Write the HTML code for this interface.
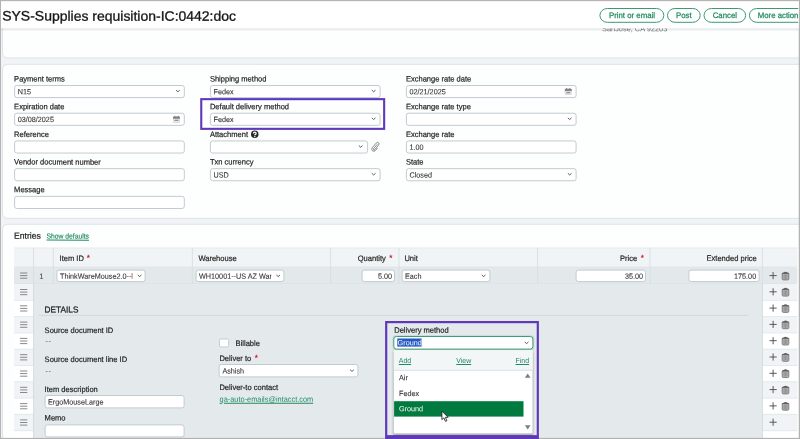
<!DOCTYPE html><html><head><meta charset="utf-8"><title>SYS-Supplies requisition</title>
<style>html,body{margin:0;padding:0;}body{width:800px;height:439px;overflow:hidden;position:relative;background:#f1f4f6;font-family:"Liberation Sans", sans-serif;}#root{position:absolute;left:0;top:0;width:800px;height:439px;overflow:hidden;will-change:transform;}.t{position:absolute;left:0;top:0;white-space:nowrap;transform-origin:0 0;}svg{display:block}</style></head><body><div id="root">
<svg style="position:absolute;left:0;top:0" width="800" height="439" viewBox="0 0 800 439"><rect x="0.00" y="0.00" width="800.00" height="439.00" rx="0" fill="#f1f4f6" /><rect x="2.50" y="20.50" width="817.00" height="37.50" rx="5" fill="#fdfefe" stroke="#dce3e7" stroke-width="1" /><rect x="2.50" y="64.30" width="817.00" height="154.10" rx="5" fill="#fdfefe" stroke="#dce3e7" stroke-width="1" /><rect x="2.50" y="224.25" width="817.00" height="245.25" rx="5" fill="#fdfefe" stroke="#dce3e7" stroke-width="1" /></svg>
<div class="t" style="font-size:7.4px;line-height:9px;height:9px;color:#666;transform:matrix(1.0,0.0006,0,1,602.00,24.30);">SanJose, CA 92203</div>
<svg style="position:absolute;left:0;top:0" width="800" height="439" viewBox="0 0 800 439"><defs><linearGradient id="hs" x1="0" y1="0" x2="0" y2="1"><stop offset="0" stop-color="#5a6b75" stop-opacity=".22"/><stop offset="1" stop-color="#5a6b75" stop-opacity="0"/></linearGradient></defs><rect x="1.00" y="28.20" width="798.00" height="3.00" rx="0" fill="url(#hs)" /><rect x="1.00" y="1.00" width="798.00" height="27.40" rx="0" fill="#fff" /><rect x="599.90" y="8.50" width="63.90" height="13.80" rx="7.4" fill="#fff" stroke="#3c9a73" stroke-width="1" /><rect x="667.50" y="8.50" width="32.70" height="13.80" rx="7.4" fill="#fff" stroke="#3c9a73" stroke-width="1" /><rect x="704.00" y="8.50" width="41.60" height="13.80" rx="7.4" fill="#fff" stroke="#3c9a73" stroke-width="1" /><rect x="749.40" y="8.50" width="80.10" height="13.80" rx="7.4" fill="#fff" stroke="#3c9a73" stroke-width="1" /></svg>
<div class="t" style="font-size:13.7px;line-height:15px;height:15px;color:#151515;-webkit-text-stroke:0.3px #151515;transform:matrix(1.021,0.0006,0,1,2.20,8.60);">SYS-Supplies requisition-IC:0442:doc</div>
<div class="t" style="font-size:8.0px;line-height:9px;height:9px;color:#1f8a5f;-webkit-text-stroke:0.25px #1f8a5f;transform:matrix(0.975,0.0006,0,1,609.00,10.90);">Print or email</div>
<div class="t" style="font-size:8.0px;line-height:9px;height:9px;color:#1f8a5f;-webkit-text-stroke:0.25px #1f8a5f;transform:matrix(0.975,0.0006,0,1,676.00,10.90);">Post</div>
<div class="t" style="font-size:8.0px;line-height:9px;height:9px;color:#1f8a5f;-webkit-text-stroke:0.25px #1f8a5f;transform:matrix(0.975,0.0006,0,1,712.70,10.90);">Cancel</div>
<div class="t" style="font-size:8.0px;line-height:9px;height:9px;color:#1f8a5f;-webkit-text-stroke:0.25px #1f8a5f;transform:matrix(0.975,0.0006,0,1,757.70,10.90);">More actions</div>
<svg style="position:absolute;left:0;top:0" width="800" height="439" viewBox="0 0 800 439"><rect x="14.60" y="85.50" width="169.70" height="12.10" rx="2.2" fill="#fff" stroke="#c0cbd1" stroke-width="1" /><path d="M176.05 90.15L177.90 91.80L179.75 90.15" fill="none" stroke="#4a4a4a" stroke-width="0.9"/><rect x="14.60" y="113.22" width="169.70" height="12.10" rx="2.2" fill="#fff" stroke="#c0cbd1" stroke-width="1" /><g transform="translate(172.80 115.72) scale(0.92)"><rect x="0.2" y="0.9" width="7.6" height="6.7" rx="1.1" fill="#d3d3d3"/><path d="M0.2 3.2V2Q0.2 0.9 1.3 0.9H6.7Q7.8 0.9 7.8 2V3.2Z" fill="#848484"/><rect x="1.7" y="0" width="1" height="1.7" rx=".4" fill="#7a7a7a"/><rect x="5.3" y="0" width="1" height="1.7" rx=".4" fill="#7a7a7a"/><rect x="1" y="3.7" width="6" height="3.2" rx=".4" fill="#ededed"/><rect x="1.9" y="4.3" width="4.2" height="1.5" fill="#929292"/></g><rect x="14.60" y="140.94" width="169.70" height="12.10" rx="2.2" fill="#fff" stroke="#c0cbd1" stroke-width="1" /><rect x="14.60" y="168.66" width="169.70" height="12.10" rx="2.2" fill="#fff" stroke="#c0cbd1" stroke-width="1" /><rect x="14.60" y="196.38" width="169.70" height="12.10" rx="2.2" fill="#fff" stroke="#c0cbd1" stroke-width="1" /><rect x="210.40" y="85.50" width="169.70" height="12.10" rx="2.2" fill="#fff" stroke="#c0cbd1" stroke-width="1" /><path d="M371.85 90.15L373.70 91.80L375.55 90.15" fill="none" stroke="#4a4a4a" stroke-width="0.9"/><rect x="210.40" y="113.22" width="169.70" height="12.10" rx="2.2" fill="#fff" stroke="#c0cbd1" stroke-width="1" /><path d="M371.85 117.87L373.70 119.52L375.55 117.87" fill="none" stroke="#4a4a4a" stroke-width="0.9"/><rect x="210.40" y="140.94" width="157.20" height="12.10" rx="2.2" fill="#fff" stroke="#c0cbd1" stroke-width="1" /><path d="M358.85 145.59L360.70 147.24L362.55 145.59" fill="none" stroke="#4a4a4a" stroke-width="0.9"/><rect x="210.40" y="168.66" width="169.70" height="12.10" rx="2.2" fill="#fff" stroke="#c0cbd1" stroke-width="1" /><path d="M371.85 173.31L373.70 174.96L375.55 173.31" fill="none" stroke="#4a4a4a" stroke-width="0.9"/><rect x="406.40" y="85.50" width="169.70" height="12.10" rx="2.2" fill="#fff" stroke="#c0cbd1" stroke-width="1" /><g transform="translate(564.60 88.00) scale(0.92)"><rect x="0.2" y="0.9" width="7.6" height="6.7" rx="1.1" fill="#d3d3d3"/><path d="M0.2 3.2V2Q0.2 0.9 1.3 0.9H6.7Q7.8 0.9 7.8 2V3.2Z" fill="#848484"/><rect x="1.7" y="0" width="1" height="1.7" rx=".4" fill="#7a7a7a"/><rect x="5.3" y="0" width="1" height="1.7" rx=".4" fill="#7a7a7a"/><rect x="1" y="3.7" width="6" height="3.2" rx=".4" fill="#ededed"/><rect x="1.9" y="4.3" width="4.2" height="1.5" fill="#929292"/></g><rect x="406.40" y="113.22" width="169.70" height="12.10" rx="2.2" fill="#fff" stroke="#c0cbd1" stroke-width="1" /><path d="M567.85 117.87L569.70 119.52L571.55 117.87" fill="none" stroke="#4a4a4a" stroke-width="0.9"/><rect x="406.40" y="140.94" width="169.70" height="12.10" rx="2.2" fill="#fff" stroke="#c0cbd1" stroke-width="1" /><rect x="406.40" y="168.66" width="169.70" height="12.10" rx="2.2" fill="#fff" stroke="#c0cbd1" stroke-width="1" /><path d="M567.85 173.31L569.70 174.96L571.55 173.31" fill="none" stroke="#4a4a4a" stroke-width="0.9"/><g transform="translate(251.00 130.60) scale(0.535)"><circle cx="7" cy="7" r="7" fill="#262626"/><path d="M4.4 5.6 Q4.4 3 7 3 Q9.6 3 9.6 5.2 Q9.6 6.4 8.2 7.1 Q7.1 7.7 7.1 8.8" fill="none" stroke="#fff" stroke-width="2.3"/><circle cx="7.1" cy="11.2" r="1.35" fill="#fff"/></g><g transform="translate(370.60 141.60) scale(0.5)"><path d="M13.5 5.5 L6 14 Q4.8 15.4 6 16.4 Q7.2 17.4 8.4 16 L16 7 Q18 4.4 15.8 2.4 Q13.4 0.6 11.2 3 L3.4 12 Q0.6 15.6 3.8 18.4 Q7 20.8 9.8 17.6 L14 12.6" fill="none" stroke="#636363" stroke-width="1.5"/></g><rect x="201.25" y="99.15" width="182.90" height="29.70" rx="0" fill="none" stroke="#6039bb" stroke-width="2.1" /></svg>
<div class="t" style="font-size:7.9px;line-height:9px;height:9px;color:#262626;-webkit-text-stroke:0.2px #262626;transform:matrix(0.955,0.0006,0,1,14.10,74.50);">Payment terms</div>
<div class="t" style="font-size:7.5px;line-height:9px;height:9px;color:#353535;-webkit-text-stroke:0.1px #353535;transform:matrix(0.965,0.0006,0,1,17.70,87.30);">N15</div>
<div class="t" style="font-size:7.9px;line-height:9px;height:9px;color:#262626;-webkit-text-stroke:0.2px #262626;transform:matrix(0.955,0.0006,0,1,14.10,102.20);">Expiration date</div>
<div class="t" style="font-size:7.5px;line-height:9px;height:9px;color:#353535;-webkit-text-stroke:0.1px #353535;transform:matrix(0.965,0.0006,0,1,17.70,115.02);">03/08/2025</div>
<div class="t" style="font-size:7.9px;line-height:9px;height:9px;color:#262626;-webkit-text-stroke:0.2px #262626;transform:matrix(0.955,0.0006,0,1,14.10,129.90);">Reference</div>
<div class="t" style="font-size:7.9px;line-height:9px;height:9px;color:#262626;-webkit-text-stroke:0.2px #262626;transform:matrix(0.955,0.0006,0,1,14.10,157.60);">Vendor document number</div>
<div class="t" style="font-size:7.9px;line-height:9px;height:9px;color:#262626;-webkit-text-stroke:0.2px #262626;transform:matrix(0.955,0.0006,0,1,14.10,185.30);">Message</div>
<div class="t" style="font-size:7.9px;line-height:9px;height:9px;color:#262626;-webkit-text-stroke:0.2px #262626;transform:matrix(0.955,0.0006,0,1,209.90,74.50);">Shipping method</div>
<div class="t" style="font-size:7.5px;line-height:9px;height:9px;color:#353535;-webkit-text-stroke:0.1px #353535;transform:matrix(0.965,0.0006,0,1,213.50,87.30);">Fedex</div>
<div class="t" style="font-size:7.9px;line-height:9px;height:9px;color:#262626;-webkit-text-stroke:0.2px #262626;transform:matrix(0.955,0.0006,0,1,209.90,102.20);">Default delivery method</div>
<div class="t" style="font-size:7.5px;line-height:9px;height:9px;color:#353535;-webkit-text-stroke:0.1px #353535;transform:matrix(0.965,0.0006,0,1,213.50,115.02);">Fedex</div>
<div class="t" style="font-size:7.9px;line-height:9px;height:9px;color:#262626;-webkit-text-stroke:0.2px #262626;transform:matrix(0.955,0.0006,0,1,209.90,129.90);">Attachment</div>
<div class="t" style="font-size:7.9px;line-height:9px;height:9px;color:#262626;-webkit-text-stroke:0.2px #262626;transform:matrix(0.955,0.0006,0,1,209.90,157.60);">Txn currency</div>
<div class="t" style="font-size:7.5px;line-height:9px;height:9px;color:#353535;-webkit-text-stroke:0.1px #353535;transform:matrix(0.965,0.0006,0,1,213.50,170.46);">USD</div>
<div class="t" style="font-size:7.9px;line-height:9px;height:9px;color:#262626;-webkit-text-stroke:0.2px #262626;transform:matrix(0.955,0.0006,0,1,405.90,74.50);">Exchange rate date</div>
<div class="t" style="font-size:7.5px;line-height:9px;height:9px;color:#353535;-webkit-text-stroke:0.1px #353535;transform:matrix(0.965,0.0006,0,1,409.50,87.30);">02/21/2025</div>
<div class="t" style="font-size:7.9px;line-height:9px;height:9px;color:#262626;-webkit-text-stroke:0.2px #262626;transform:matrix(0.955,0.0006,0,1,405.90,102.20);">Exchange rate type</div>
<div class="t" style="font-size:7.9px;line-height:9px;height:9px;color:#262626;-webkit-text-stroke:0.2px #262626;transform:matrix(0.955,0.0006,0,1,405.90,129.90);">Exchange rate</div>
<div class="t" style="font-size:7.5px;line-height:9px;height:9px;color:#353535;-webkit-text-stroke:0.1px #353535;transform:matrix(0.965,0.0006,0,1,409.50,142.74);">1.00</div>
<div class="t" style="font-size:7.9px;line-height:9px;height:9px;color:#262626;-webkit-text-stroke:0.2px #262626;transform:matrix(0.955,0.0006,0,1,405.90,157.60);">State</div>
<div class="t" style="font-size:7.5px;line-height:9px;height:9px;color:#353535;-webkit-text-stroke:0.1px #353535;transform:matrix(0.965,0.0006,0,1,409.50,170.46);">Closed</div>
<svg style="position:absolute;left:0;top:0" width="800" height="439" viewBox="0 0 800 439"><rect x="14.00" y="247.75" width="783.40" height="19.35" rx="0" fill="#f1f4f6" /><path d="M14.00 248.05H797.40" stroke="#e2e8eb" stroke-width="0.8"/><rect x="14.00" y="267.10" width="783.40" height="16.90" rx="2.5" fill="#e3e8eb" /><rect x="14.00" y="267.10" width="686.00" height="16.90" rx="0" fill="#e3e8eb" /><path d="M33.60 247.75V284.00" stroke="#d6dee2" stroke-width="0.9"/><path d="M53.30 247.75V284.00" stroke="#d6dee2" stroke-width="0.9"/><path d="M192.40 247.75V284.00" stroke="#d6dee2" stroke-width="0.9"/><path d="M330.60 247.75V284.00" stroke="#d6dee2" stroke-width="0.9"/><path d="M399.00 247.75V284.00" stroke="#d6dee2" stroke-width="0.9"/><path d="M537.60 247.75V284.00" stroke="#d6dee2" stroke-width="0.9"/><path d="M650.00 247.75V284.00" stroke="#d6dee2" stroke-width="0.9"/><path d="M762.40 247.75V284.00" stroke="#d6dee2" stroke-width="0.9"/><path d="M14.00 267.10H797.40" stroke="#dde4e7" stroke-width="0.9"/><path d="M14.00 284.00H797.40" stroke="#d8dfe3" stroke-width="0.9"/><path d="M20.10 273.00h7.2M20.10 275.60h7.2M20.10 278.20h7.2" stroke="#727272" stroke-width="0.85"/><rect x="56.90" y="270.10" width="88.20" height="11.50" rx="2.2" fill="#fff" stroke="#c0cbd1" stroke-width="1" /><rect x="196.10" y="270.10" width="87.80" height="11.50" rx="2.2" fill="#fff" stroke="#c0cbd1" stroke-width="1" /><rect x="362.10" y="270.10" width="32.40" height="11.50" rx="2.2" fill="#fff" stroke="#c0cbd1" stroke-width="1" /><rect x="402.10" y="270.10" width="87.80" height="11.50" rx="2.2" fill="#fff" stroke="#c0cbd1" stroke-width="1" /><rect x="576.10" y="270.10" width="69.40" height="11.50" rx="2.2" fill="#fff" stroke="#c0cbd1" stroke-width="1" /><rect x="688.90" y="270.10" width="70.20" height="11.50" rx="2.2" fill="#fff" stroke="#c0cbd1" stroke-width="1" /><path d="M137.75 274.95L139.60 276.60L141.45 274.95" fill="none" stroke="#4a4a4a" stroke-width="0.9"/><path d="M276.35 274.95L278.20 276.60L280.05 274.95" fill="none" stroke="#4a4a4a" stroke-width="0.9"/><path d="M481.75 274.95L483.60 276.60L485.45 274.95" fill="none" stroke="#4a4a4a" stroke-width="0.9"/><path d="M773.10 272.00v7.2M769.50 275.60h7.2" stroke="#505050" stroke-width="0.95"/><g transform="translate(781.85 270.90) scale(1)"><path d="M0.35 2.4H6.95V7.9Q6.95 9 5.85 9H1.45Q0.35 9 0.35 7.9Z" fill="#b4b4b4" stroke="#6c6c6c" stroke-width="0.8"/><path d="M2.25 3.5V8M3.65 3.5V8M5.05 3.5V8" stroke="#7a7a7a" stroke-width="0.6"/><path d="M0.1 2.75Q0.1 1.7 1.7 1.5Q3.65 0 5.6 1.5Q7.2 1.7 7.2 2.75Z" fill="#5f5f5f"/></g><rect x="33.60" y="284.00" width="728.80" height="166.00" rx="0" fill="#e4eaec" /><rect x="14.00" y="284.00" width="19.60" height="16.30" rx="0" fill="#f1f4f6" /><rect x="762.40" y="284.00" width="35.00" height="16.30" rx="0" fill="#f1f4f6" /><path d="M20.10 289.50h7.2M20.10 292.10h7.2M20.10 294.70h7.2" stroke="#727272" stroke-width="0.85"/><path d="M773.10 288.20v7.2M769.50 291.80h7.2" stroke="#505050" stroke-width="0.95"/><g transform="translate(781.85 287.10) scale(1)"><path d="M0.35 2.4H6.95V7.9Q6.95 9 5.85 9H1.45Q0.35 9 0.35 7.9Z" fill="#b4b4b4" stroke="#6c6c6c" stroke-width="0.8"/><path d="M2.25 3.5V8M3.65 3.5V8M5.05 3.5V8" stroke="#7a7a7a" stroke-width="0.6"/><path d="M0.1 2.75Q0.1 1.7 1.7 1.5Q3.65 0 5.6 1.5Q7.2 1.7 7.2 2.75Z" fill="#5f5f5f"/></g><rect x="14.00" y="300.30" width="19.60" height="16.30" rx="0" fill="#ffffff" /><rect x="762.40" y="300.30" width="35.00" height="16.30" rx="0" fill="#ffffff" /><path d="M14.00 300.30H33.60" stroke="#e0e7ea" stroke-width="0.9"/><path d="M762.40 300.30H797.40" stroke="#e0e7ea" stroke-width="0.9"/><path d="M20.10 305.80h7.2M20.10 308.40h7.2M20.10 311.00h7.2" stroke="#727272" stroke-width="0.85"/><path d="M773.10 304.50v7.2M769.50 308.10h7.2" stroke="#505050" stroke-width="0.95"/><g transform="translate(781.85 303.40) scale(1)"><path d="M0.35 2.4H6.95V7.9Q6.95 9 5.85 9H1.45Q0.35 9 0.35 7.9Z" fill="#b4b4b4" stroke="#6c6c6c" stroke-width="0.8"/><path d="M2.25 3.5V8M3.65 3.5V8M5.05 3.5V8" stroke="#7a7a7a" stroke-width="0.6"/><path d="M0.1 2.75Q0.1 1.7 1.7 1.5Q3.65 0 5.6 1.5Q7.2 1.7 7.2 2.75Z" fill="#5f5f5f"/></g><rect x="14.00" y="316.60" width="19.60" height="16.30" rx="0" fill="#f1f4f6" /><rect x="762.40" y="316.60" width="35.00" height="16.30" rx="0" fill="#f1f4f6" /><path d="M14.00 316.60H33.60" stroke="#e0e7ea" stroke-width="0.9"/><path d="M762.40 316.60H797.40" stroke="#e0e7ea" stroke-width="0.9"/><path d="M20.10 322.10h7.2M20.10 324.70h7.2M20.10 327.30h7.2" stroke="#727272" stroke-width="0.85"/><path d="M773.10 320.80v7.2M769.50 324.40h7.2" stroke="#505050" stroke-width="0.95"/><g transform="translate(781.85 319.70) scale(1)"><path d="M0.35 2.4H6.95V7.9Q6.95 9 5.85 9H1.45Q0.35 9 0.35 7.9Z" fill="#b4b4b4" stroke="#6c6c6c" stroke-width="0.8"/><path d="M2.25 3.5V8M3.65 3.5V8M5.05 3.5V8" stroke="#7a7a7a" stroke-width="0.6"/><path d="M0.1 2.75Q0.1 1.7 1.7 1.5Q3.65 0 5.6 1.5Q7.2 1.7 7.2 2.75Z" fill="#5f5f5f"/></g><rect x="14.00" y="332.90" width="19.60" height="16.30" rx="0" fill="#ffffff" /><rect x="762.40" y="332.90" width="35.00" height="16.30" rx="0" fill="#ffffff" /><path d="M14.00 332.90H33.60" stroke="#e0e7ea" stroke-width="0.9"/><path d="M762.40 332.90H797.40" stroke="#e0e7ea" stroke-width="0.9"/><path d="M20.10 338.40h7.2M20.10 341.00h7.2M20.10 343.60h7.2" stroke="#727272" stroke-width="0.85"/><path d="M773.10 337.10v7.2M769.50 340.70h7.2" stroke="#505050" stroke-width="0.95"/><g transform="translate(781.85 336.00) scale(1)"><path d="M0.35 2.4H6.95V7.9Q6.95 9 5.85 9H1.45Q0.35 9 0.35 7.9Z" fill="#b4b4b4" stroke="#6c6c6c" stroke-width="0.8"/><path d="M2.25 3.5V8M3.65 3.5V8M5.05 3.5V8" stroke="#7a7a7a" stroke-width="0.6"/><path d="M0.1 2.75Q0.1 1.7 1.7 1.5Q3.65 0 5.6 1.5Q7.2 1.7 7.2 2.75Z" fill="#5f5f5f"/></g><rect x="14.00" y="349.20" width="19.60" height="16.30" rx="0" fill="#f1f4f6" /><rect x="762.40" y="349.20" width="35.00" height="16.30" rx="0" fill="#f1f4f6" /><path d="M14.00 349.20H33.60" stroke="#e0e7ea" stroke-width="0.9"/><path d="M762.40 349.20H797.40" stroke="#e0e7ea" stroke-width="0.9"/><path d="M20.10 354.70h7.2M20.10 357.30h7.2M20.10 359.90h7.2" stroke="#727272" stroke-width="0.85"/><path d="M773.10 353.40v7.2M769.50 357.00h7.2" stroke="#505050" stroke-width="0.95"/><g transform="translate(781.85 352.30) scale(1)"><path d="M0.35 2.4H6.95V7.9Q6.95 9 5.85 9H1.45Q0.35 9 0.35 7.9Z" fill="#b4b4b4" stroke="#6c6c6c" stroke-width="0.8"/><path d="M2.25 3.5V8M3.65 3.5V8M5.05 3.5V8" stroke="#7a7a7a" stroke-width="0.6"/><path d="M0.1 2.75Q0.1 1.7 1.7 1.5Q3.65 0 5.6 1.5Q7.2 1.7 7.2 2.75Z" fill="#5f5f5f"/></g><rect x="14.00" y="365.50" width="19.60" height="16.30" rx="0" fill="#ffffff" /><rect x="762.40" y="365.50" width="35.00" height="16.30" rx="0" fill="#ffffff" /><path d="M14.00 365.50H33.60" stroke="#e0e7ea" stroke-width="0.9"/><path d="M762.40 365.50H797.40" stroke="#e0e7ea" stroke-width="0.9"/><path d="M20.10 371.00h7.2M20.10 373.60h7.2M20.10 376.20h7.2" stroke="#727272" stroke-width="0.85"/><path d="M773.10 369.70v7.2M769.50 373.30h7.2" stroke="#505050" stroke-width="0.95"/><g transform="translate(781.85 368.60) scale(1)"><path d="M0.35 2.4H6.95V7.9Q6.95 9 5.85 9H1.45Q0.35 9 0.35 7.9Z" fill="#b4b4b4" stroke="#6c6c6c" stroke-width="0.8"/><path d="M2.25 3.5V8M3.65 3.5V8M5.05 3.5V8" stroke="#7a7a7a" stroke-width="0.6"/><path d="M0.1 2.75Q0.1 1.7 1.7 1.5Q3.65 0 5.6 1.5Q7.2 1.7 7.2 2.75Z" fill="#5f5f5f"/></g><rect x="14.00" y="381.80" width="19.60" height="16.30" rx="0" fill="#f1f4f6" /><rect x="762.40" y="381.80" width="35.00" height="16.30" rx="0" fill="#f1f4f6" /><path d="M14.00 381.80H33.60" stroke="#e0e7ea" stroke-width="0.9"/><path d="M762.40 381.80H797.40" stroke="#e0e7ea" stroke-width="0.9"/><path d="M20.10 387.30h7.2M20.10 389.90h7.2M20.10 392.50h7.2" stroke="#727272" stroke-width="0.85"/><path d="M773.10 386.00v7.2M769.50 389.60h7.2" stroke="#505050" stroke-width="0.95"/><g transform="translate(781.85 384.90) scale(1)"><path d="M0.35 2.4H6.95V7.9Q6.95 9 5.85 9H1.45Q0.35 9 0.35 7.9Z" fill="#b4b4b4" stroke="#6c6c6c" stroke-width="0.8"/><path d="M2.25 3.5V8M3.65 3.5V8M5.05 3.5V8" stroke="#7a7a7a" stroke-width="0.6"/><path d="M0.1 2.75Q0.1 1.7 1.7 1.5Q3.65 0 5.6 1.5Q7.2 1.7 7.2 2.75Z" fill="#5f5f5f"/></g><rect x="14.00" y="398.10" width="19.60" height="16.30" rx="0" fill="#ffffff" /><rect x="762.40" y="398.10" width="35.00" height="16.30" rx="0" fill="#ffffff" /><path d="M14.00 398.10H33.60" stroke="#e0e7ea" stroke-width="0.9"/><path d="M762.40 398.10H797.40" stroke="#e0e7ea" stroke-width="0.9"/><path d="M20.10 403.60h7.2M20.10 406.20h7.2M20.10 408.80h7.2" stroke="#727272" stroke-width="0.85"/><path d="M773.10 402.30v7.2M769.50 405.90h7.2" stroke="#505050" stroke-width="0.95"/><g transform="translate(781.85 401.20) scale(1)"><path d="M0.35 2.4H6.95V7.9Q6.95 9 5.85 9H1.45Q0.35 9 0.35 7.9Z" fill="#b4b4b4" stroke="#6c6c6c" stroke-width="0.8"/><path d="M2.25 3.5V8M3.65 3.5V8M5.05 3.5V8" stroke="#7a7a7a" stroke-width="0.6"/><path d="M0.1 2.75Q0.1 1.7 1.7 1.5Q3.65 0 5.6 1.5Q7.2 1.7 7.2 2.75Z" fill="#5f5f5f"/></g><rect x="14.00" y="414.40" width="19.60" height="16.30" rx="0" fill="#f1f4f6" /><rect x="762.40" y="414.40" width="35.00" height="16.30" rx="0" fill="#f1f4f6" /><path d="M14.00 414.40H33.60" stroke="#e0e7ea" stroke-width="0.9"/><path d="M762.40 414.40H797.40" stroke="#e0e7ea" stroke-width="0.9"/><path d="M20.10 419.90h7.2M20.10 422.50h7.2M20.10 425.10h7.2" stroke="#727272" stroke-width="0.85"/><path d="M773.10 418.60v7.2M769.50 422.20h7.2" stroke="#505050" stroke-width="0.95"/><rect x="14.00" y="430.70" width="19.60" height="16.30" rx="0" fill="#ffffff" /><rect x="762.40" y="430.70" width="35.00" height="16.30" rx="0" fill="#ffffff" /><path d="M14.00 430.70H33.60" stroke="#e0e7ea" stroke-width="0.9"/><path d="M762.40 430.70H797.40" stroke="#e0e7ea" stroke-width="0.9"/><path d="M33.60 284.00V450.00" stroke="#d0d9dd" stroke-width="0.9"/><path d="M762.40 284.00V450.00" stroke="#d0d9dd" stroke-width="0.9"/><path d="M39.00 315.40H748.50" stroke="#ced7dc" stroke-width="0.9"/><rect x="45.10" y="395.50" width="139.00" height="12.40" rx="2.2" fill="#fff" stroke="#c0cbd1" stroke-width="1" /><rect x="45.10" y="424.90" width="139.00" height="12.00" rx="2.2" fill="#fff" stroke="#c0cbd1" stroke-width="1" /><rect x="219.50" y="339.00" width="9.20" height="8.00" rx="1.4" fill="#fff" stroke="#c3cdd2" stroke-width="1" /><rect x="219.10" y="364.50" width="138.80" height="12.40" rx="2.2" fill="#fff" stroke="#c0cbd1" stroke-width="1" /><path d="M350.15 369.75L352.00 371.40L353.85 369.75" fill="none" stroke="#4a4a4a" stroke-width="0.9"/><rect x="386.20" y="322.10" width="151.60" height="114.10" rx="0" fill="none" stroke="#6039bb" stroke-width="2.2" /><rect x="392.50" y="335.20" width="141.70" height="15.20" rx="3.3" fill="rgba(70,170,125,.22)" /><rect x="393.80" y="336.50" width="139.10" height="12.60" rx="2.6" fill="#fff" stroke="#3f9c76" stroke-width="1" /><rect x="397.30" y="338.50" width="24.30" height="8.10" rx="0" fill="#2458c6" /><path d="M524.75 341.95L526.60 343.60L528.45 341.95" fill="none" stroke="#4a4a4a" stroke-width="0.9"/><defs><filter id="ds" x="-10%" y="-10%" width="120%" height="125%"><feGaussianBlur stdDeviation="1.1"/></filter></defs><rect x="393.40" y="351.20" width="139.60" height="83.80" rx="0" fill="rgba(0,0,0,.33)" filter="url(#ds)"/><rect x="393.80" y="350.30" width="138.80" height="83.20" rx="1" fill="#fff" /><rect x="393.80" y="350.30" width="138.80" height="20.00" rx="1" fill="#f3f6f7" /><path d="M393.80 370.30H532.60" stroke="#d6dee2" stroke-width="0.9"/><rect x="394.10" y="401.20" width="129.40" height="15.40" rx="0" fill="#007a3e" /><path d="M524.9 377.8 L527.7 373.4 L530.5 377.8 Z" fill="#7d7d7d"/><path d="M524.9 425.2 L527.7 429.6 L530.5 425.2 Z" fill="#7d7d7d"/></svg>
<div class="t" style="font-size:8.9px;line-height:10px;height:10px;color:#1c1c1c;-webkit-text-stroke:0.2px #1c1c1c;transform:matrix(0.975,0.0006,0,1,14.00,230.75);">Entries</div>
<div class="t" style="font-size:7.2px;line-height:9px;height:9px;color:#1f8a5f;-webkit-text-stroke:0.15px #1f8a5f;transform:matrix(0.94,0.0006,0,1,46.50,231.60);text-decoration:underline;text-underline-offset:1.3px;text-decoration-thickness:0.7px;">Show defaults</div>
<div class="t" style="font-size:7.9px;line-height:9px;height:9px;color:#262626;-webkit-text-stroke:0.2px #262626;transform:matrix(0.955,0.0006,0,1,59.60,253.90);">Item ID</div>
<div class="t" style="font-size:8.2px;line-height:9px;height:9px;color:#cc1f2d;font-weight:bold;transform:matrix(1.0,0.0006,0,1,86.70,253.40);">*</div>
<div class="t" style="font-size:7.9px;line-height:9px;height:9px;color:#262626;-webkit-text-stroke:0.2px #262626;transform:matrix(0.955,0.0006,0,1,198.40,253.90);">Warehouse</div>
<div class="t" style="font-size:7.9px;line-height:9px;height:9px;color:#262626;-webkit-text-stroke:0.2px #262626;width:385.80px;text-align:right;transform-origin:100% 0;transform:matrix(0.955,0.0006,0,1,0,253.90);">Quantity</div>
<div class="t" style="font-size:8.2px;line-height:9px;height:9px;color:#cc1f2d;font-weight:bold;transform:matrix(1.0,0.0006,0,1,389.30,253.40);">*</div>
<div class="t" style="font-size:7.9px;line-height:9px;height:9px;color:#262626;-webkit-text-stroke:0.2px #262626;transform:matrix(0.955,0.0006,0,1,404.40,253.90);">Unit</div>
<div class="t" style="font-size:7.9px;line-height:9px;height:9px;color:#262626;-webkit-text-stroke:0.2px #262626;width:637.20px;text-align:right;transform-origin:100% 0;transform:matrix(0.955,0.0006,0,1,0,253.90);">Price</div>
<div class="t" style="font-size:8.2px;line-height:9px;height:9px;color:#cc1f2d;font-weight:bold;transform:matrix(1.0,0.0006,0,1,640.70,253.40);">*</div>
<div class="t" style="font-size:7.9px;line-height:9px;height:9px;color:#262626;-webkit-text-stroke:0.2px #262626;width:756.80px;text-align:right;transform-origin:100% 0;transform:matrix(0.955,0.0006,0,1,0,253.90);">Extended price</div>
<div class="t" style="font-size:7.6px;line-height:9px;height:9px;color:#333;transform:matrix(1.0,0.0006,0,1,39.20,271.75);">1</div>
<div class="t" style="font-size:7.5px;line-height:9px;height:9px;color:#353535;-webkit-text-stroke:0.1px #353535;transform:matrix(0.965,0.0006,0,1,60.00,271.75);width:76.5px;overflow:hidden;">ThinkWareMouse2.0--<span style="color:#b4604c">l</span></div>
<div class="t" style="font-size:7.5px;line-height:9px;height:9px;color:#353535;-webkit-text-stroke:0.1px #353535;transform:matrix(0.965,0.0006,0,1,199.00,271.75);width:75.4px;overflow:hidden;">WH10001--US AZ War</div>
<div class="t" style="font-size:7.5px;line-height:9px;height:9px;color:#353535;-webkit-text-stroke:0.1px #353535;width:392.00px;text-align:right;transform-origin:100% 0;transform:matrix(0.965,0.0006,0,1,0,271.75);">5.00</div>
<div class="t" style="font-size:7.5px;line-height:9px;height:9px;color:#353535;-webkit-text-stroke:0.1px #353535;transform:matrix(0.965,0.0006,0,1,405.00,271.75);">Each</div>
<div class="t" style="font-size:7.5px;line-height:9px;height:9px;color:#353535;-webkit-text-stroke:0.1px #353535;width:643.00px;text-align:right;transform-origin:100% 0;transform:matrix(0.965,0.0006,0,1,0,271.75);">35.00</div>
<div class="t" style="font-size:7.5px;line-height:9px;height:9px;color:#353535;-webkit-text-stroke:0.1px #353535;width:756.20px;text-align:right;transform-origin:100% 0;transform:matrix(0.965,0.0006,0,1,0,271.75);">175.00</div>
<div class="t" style="font-size:8.7px;line-height:10px;height:10px;color:#1c1c1c;-webkit-text-stroke:0.25px #1c1c1c;transform:matrix(0.95,0.0006,0,1,44.60,304.40);">DETAILS</div>
<div class="t" style="font-size:7.9px;line-height:9px;height:9px;color:#262626;-webkit-text-stroke:0.2px #262626;transform:matrix(0.955,0.0006,0,1,44.60,326.00);">Source document ID</div>
<div class="t" style="font-size:7.3px;line-height:9px;height:9px;color:#444;transform:matrix(1.0,0.0006,0,1,45.60,336.80);letter-spacing:0.4px;">--</div>
<div class="t" style="font-size:7.9px;line-height:9px;height:9px;color:#262626;-webkit-text-stroke:0.2px #262626;transform:matrix(0.955,0.0006,0,1,44.60,355.00);">Source document line ID</div>
<div class="t" style="font-size:7.3px;line-height:9px;height:9px;color:#444;transform:matrix(1.0,0.0006,0,1,45.60,366.60);letter-spacing:0.4px;">--</div>
<div class="t" style="font-size:7.9px;line-height:9px;height:9px;color:#262626;-webkit-text-stroke:0.2px #262626;transform:matrix(0.955,0.0006,0,1,44.60,385.00);">Item description</div>
<div class="t" style="font-size:7.5px;line-height:9px;height:9px;color:#353535;-webkit-text-stroke:0.1px #353535;transform:matrix(0.965,0.0006,0,1,48.00,397.40);">ErgoMouseLarge</div>
<div class="t" style="font-size:7.9px;line-height:9px;height:9px;color:#262626;-webkit-text-stroke:0.2px #262626;transform:matrix(0.955,0.0006,0,1,44.60,413.60);">Memo</div>
<div class="t" style="font-size:7.9px;line-height:9px;height:9px;color:#262626;-webkit-text-stroke:0.2px #262626;transform:matrix(0.955,0.0006,0,1,235.60,339.00);">Billable</div>
<div class="t" style="font-size:7.9px;line-height:9px;height:9px;color:#262626;-webkit-text-stroke:0.2px #262626;transform:matrix(0.955,0.0006,0,1,219.40,354.00);">Deliver to</div>
<div class="t" style="font-size:8.2px;line-height:9px;height:9px;color:#cc1f2d;font-weight:bold;transform:matrix(1.0,0.0006,0,1,254.70,353.50);">*</div>
<div class="t" style="font-size:7.5px;line-height:9px;height:9px;color:#353535;-webkit-text-stroke:0.1px #353535;transform:matrix(0.965,0.0006,0,1,222.40,366.40);">Ashish</div>
<div class="t" style="font-size:7.9px;line-height:9px;height:9px;color:#262626;-webkit-text-stroke:0.2px #262626;transform:matrix(0.955,0.0006,0,1,219.40,383.00);">Deliver-to contact</div>
<div class="t" style="font-size:7.7px;line-height:9px;height:9px;color:#1f8a5f;transform:matrix(0.96,0.0006,0,1,219.60,394.80);text-decoration:underline;text-underline-offset:1.3px;text-decoration-thickness:0.7px;">qa-auto-emails@intacct.com</div>
<div class="t" style="font-size:7.9px;line-height:9px;height:9px;color:#262626;-webkit-text-stroke:0.2px #262626;transform:matrix(0.955,0.0006,0,1,394.20,325.80);">Delivery method</div>
<div class="t" style="font-size:7.5px;line-height:9px;height:9px;color:#fff;transform:matrix(0.965,0.0006,0,1,397.60,338.30);">Ground</div>
<div class="t" style="font-size:7.3px;line-height:9px;height:9px;color:#1f8a5f;transform:matrix(0.95,0.0006,0,1,398.80,356.10);text-decoration:underline;text-underline-offset:1.3px;text-decoration-thickness:0.7px;">Add</div>
<div class="t" style="font-size:7.3px;line-height:9px;height:9px;color:#1f8a5f;transform:matrix(0.95,0.0006,0,1,456.30,356.10);text-decoration:underline;text-underline-offset:1.3px;text-decoration-thickness:0.7px;">View</div>
<div class="t" style="font-size:7.3px;line-height:9px;height:9px;color:#1f8a5f;transform:matrix(0.95,0.0006,0,1,515.60,356.10);text-decoration:underline;text-underline-offset:1.3px;text-decoration-thickness:0.7px;">Find</div>
<div class="t" style="font-size:7.5px;line-height:9px;height:9px;color:#353535;-webkit-text-stroke:0.1px #353535;transform:matrix(0.965,0.0006,0,1,399.00,373.30);">Air</div>
<div class="t" style="font-size:7.5px;line-height:9px;height:9px;color:#353535;-webkit-text-stroke:0.1px #353535;transform:matrix(0.965,0.0006,0,1,399.00,388.90);">Fedex</div>
<div class="t" style="font-size:7.5px;line-height:9px;height:9px;color:#fff;transform:matrix(0.965,0.0006,0,1,399.00,404.20);">Ground</div>
<svg style="position:absolute;left:0;top:0" width="800" height="439" viewBox="0 0 800 439"><g transform="translate(441.40 410.60) scale(0.5)"><path d="M1 1 L1 18 L5 14.5 L8 21.5 L11 20.2 L8 13.5 L13.5 13.5 Z" fill="#fff" stroke="#111" stroke-width="1.6" stroke-linejoin="round"/></g><rect x="0.00" y="0.00" width="800.00" height="1.15" rx="0" fill="#b5b3b3" /><rect x="0.00" y="0.00" width="1.00" height="439.00" rx="0" fill="#b3b3b3" /><rect x="798.75" y="0.00" width="1.25" height="439.00" rx="0" fill="#b3b3b3" /><rect x="0.00" y="437.90" width="800.00" height="1.10" rx="0" fill="#b1b1b1" /><rect x="385.10" y="436.80" width="153.80" height="2.20" rx="0" fill="#6039bb" /><rect x="798.10" y="1.15" width="0.70" height="26.85" rx="0" fill="#fff" /></svg>
</div></body></html>
